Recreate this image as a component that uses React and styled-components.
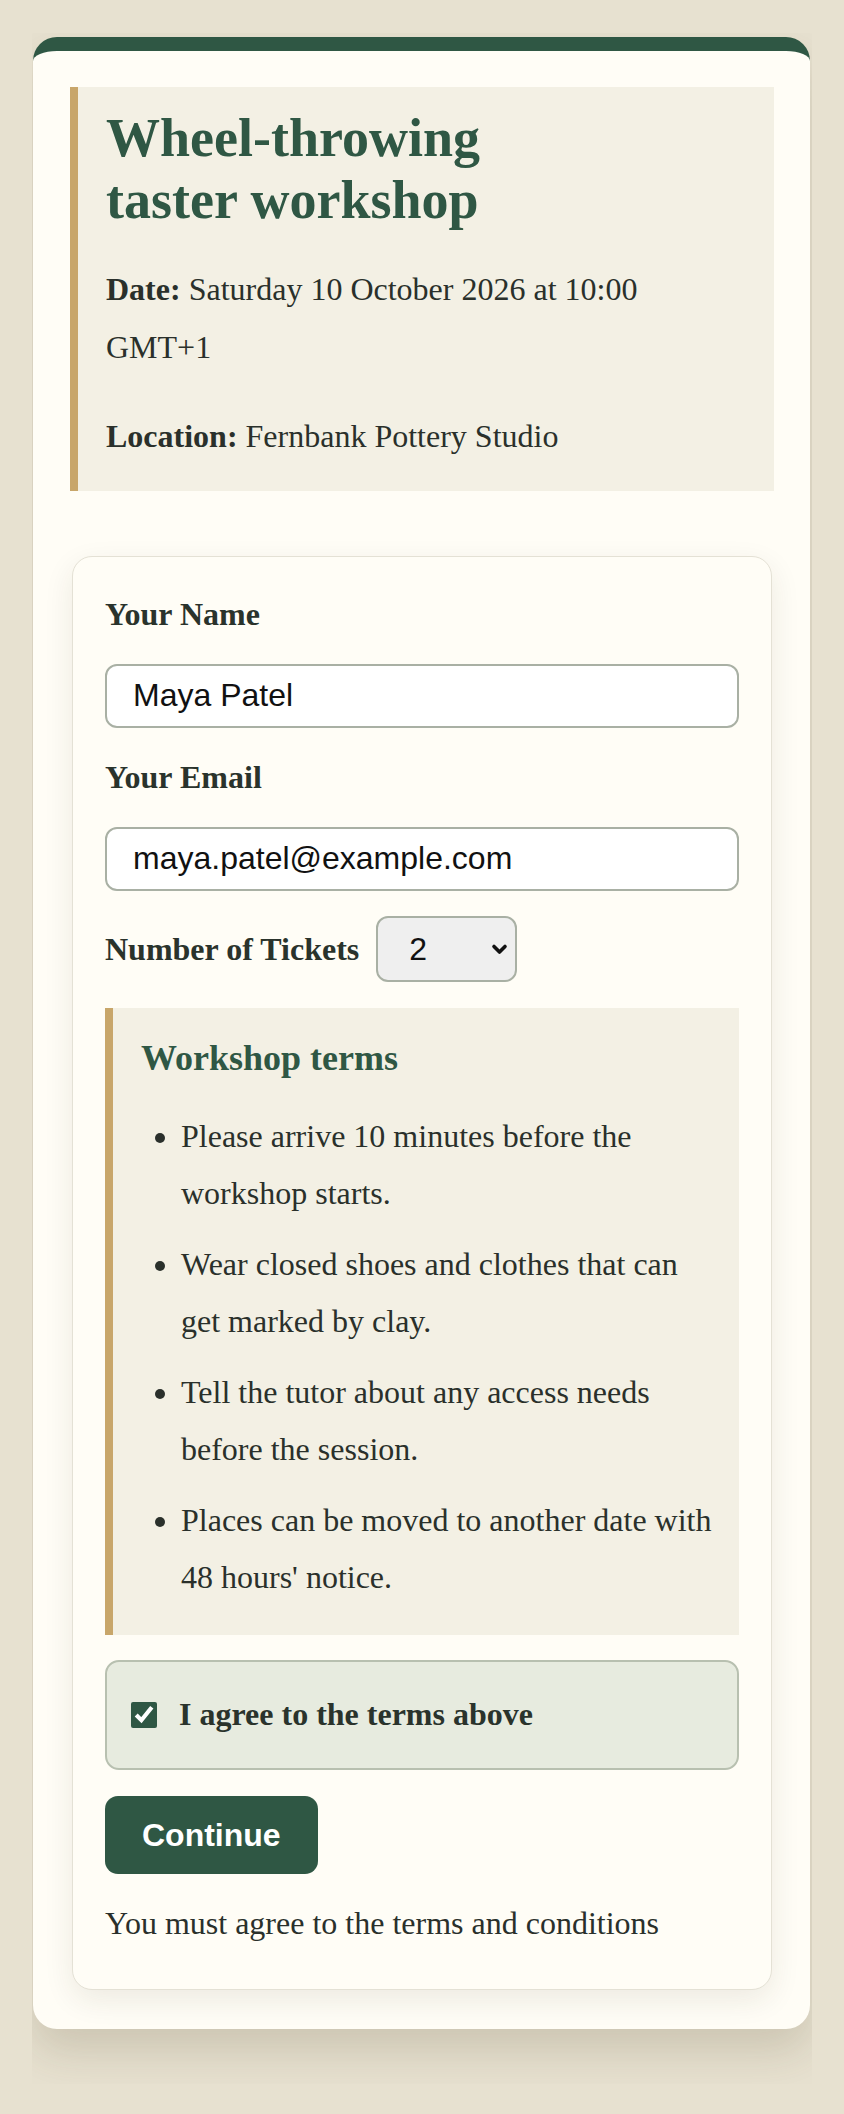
import React from "react";
import styled, { createGlobalStyle } from "styled-components";

const GlobalStyle = createGlobalStyle`
  * { box-sizing: border-box; }
  html, body { margin: 0; padding: 0; }
  body {
    background: #e7e1d0;
    font-family: "Liberation Serif", "Times New Roman", serif;
    font-size: 32px;
    line-height: 1.8;
    color: #2a302b;
  }
`;

const ShadowClip = styled.main`
  margin: 33px 32px 32px;
  padding: 4px 2px 55px 1px;
  overflow: hidden;
`;

const Card = styled.div`
  background: #fffdf6;
  border-top: 14px solid #2f5744;
  border-radius: 24px;
  padding: 36px 36px 39px 37px;
  box-shadow: 0 22px 44px rgba(70, 60, 30, 0.17);
`;

const Details = styled.section`
  background: #f3f0e4;
  border-left: 8px solid #c8a66a;
  padding: 20px 60px 25px 28px;
`;

const Title = styled.h1`
  margin: 0;
  max-width: 450px;
  font-size: 54px;
  line-height: 1.15;
  font-weight: bold;
  color: #2f5744;
`;

const Meta = styled.p`
  margin: ${(p) => (p.$first ? "30px" : "32px")} 0 0;
  color: #2a302b;
`;

const FormCard = styled.form`
  margin: 65px 2px 0;
  background: #fffdf6;
  border: 1px solid #e4e1d5;
  border-radius: 20px;
  padding: 33px 32px 42px;
  box-shadow: 0 10px 30px rgba(50, 45, 20, 0.09);
  display: flex;
  flex-direction: column;
  gap: 25.6px;
`;

const FieldLabel = styled.label`
  display: block;
  font-weight: bold;
  line-height: 1.5;
  color: #2a332c;
`;

const TextInput = styled.input`
  display: block;
  width: 100%;
  font-family: "Liberation Sans", Arial, sans-serif;
  font-size: 32px;
  line-height: normal;
  color: #111;
  background: #ffffff;
  border: 2px solid #a9b0a4;
  border-radius: 12px;
  padding: 11.5px 26px;
  outline: none;
`;

const TicketRow = styled.div`
  display: flex;
  align-items: center;
  gap: 17px;
`;

const SelectWrap = styled.div`
  position: relative;
  flex: none;
`;

const TicketSelect = styled.select`
  display: block;
  appearance: none;
  -webkit-appearance: none;
  width: 141px;
  height: 66px;
  font-family: "Liberation Sans", Arial, sans-serif;
  font-size: 32px;
  color: #111;
  background-color: #efefef;
  border: 2px solid #a9b0a4;
  border-radius: 12px;
  padding: 0 40px 0 31px;
  outline: none;
`;

const Chevron = styled.svg`
  position: absolute;
  right: 9px;
  top: 50%;
  margin-top: -6px;
  width: 17px;
  height: 12px;
  pointer-events: none;
`;

const Terms = styled.section`
  background: #f3f0e4;
  border-left: 8px solid #c8a66a;
  padding: 28px 24px 28px 28px;
`;

const TermsHeading = styled.h2`
  margin: 0;
  font-size: 36px;
  line-height: 1.25;
  font-weight: bold;
  color: #2f5744;
`;

const TermsList = styled.ul`
  margin: 26.7px 0 0;
  padding-left: 40px;
`;

const TermsItem = styled.li`
  & + & { margin-top: 12.8px; }
`;

const AgreeBox = styled.div`
  display: flex;
  align-items: center;
  gap: 22px;
  background: #e7ebdf;
  border: 2px solid #b8c0b0;
  border-radius: 14px;
  padding: 24px 24px;
`;

const Checkbox = styled.input`
  width: 26px;
  height: 26px;
  margin: 0;
  accent-color: #2f5744;
  flex: none;
`;

const AgreeLabel = styled.label`
  font-weight: bold;
  line-height: 1.8;
  color: #2a332c;
`;

const ContinueButton = styled.button`
  align-self: flex-start;
  font-family: "Liberation Sans", Arial, sans-serif;
  font-size: 32px;
  font-weight: bold;
  line-height: 36px;
  color: #ffffff;
  background: #2f5744;
  border: none;
  border-radius: 13px;
  padding: 21px 37px;
  cursor: pointer;
`;

const Message = styled.p`
  margin: 0;
  line-height: 1.5;
  color: #2a302b;
`;

const terms = [
  "Please arrive 10 minutes before the workshop starts.",
  "Wear closed shoes and clothes that can get marked by clay.",
  "Tell the tutor about any access needs before the session.",
  "Places can be moved to another date with 48 hours' notice.",
];

export default function App() {
  return (
    <>
      <GlobalStyle />
      <ShadowClip>
        <Card>
          <Details>
            <Title>Wheel-throwing taster workshop</Title>
            <Meta $first>
              <strong>Date:</strong> Saturday 10 October 2026 at 10:00 GMT+1
            </Meta>
            <Meta>
              <strong>Location:</strong> Fernbank Pottery Studio
            </Meta>
          </Details>
          <FormCard onSubmit={(e) => e.preventDefault()}>
            <FieldLabel htmlFor="name">Your Name</FieldLabel>
            <TextInput id="name" type="text" defaultValue="Maya Patel" />
            <FieldLabel htmlFor="email">Your Email</FieldLabel>
            <TextInput id="email" type="email" defaultValue="maya.patel@example.com" />
            <TicketRow>
              <FieldLabel htmlFor="tickets">Number of Tickets</FieldLabel>
              <SelectWrap>
                <TicketSelect id="tickets" defaultValue="2">
                  <option value="1">1</option>
                  <option value="2">2</option>
                  <option value="3">3</option>
                  <option value="4">4</option>
                </TicketSelect>
                <Chevron viewBox="0 0 17 12" aria-hidden="true">
                  <path
                    d="M3 3.5 L8.5 9 L14 3.5"
                    fill="none"
                    stroke="#111"
                    strokeWidth="3.6"
                    strokeLinecap="round"
                    strokeLinejoin="round"
                  />
                </Chevron>
              </SelectWrap>
            </TicketRow>
            <Terms>
              <TermsHeading>Workshop terms</TermsHeading>
              <TermsList>
                {terms.map((t) => (
                  <TermsItem key={t}>{t}</TermsItem>
                ))}
              </TermsList>
            </Terms>
            <AgreeBox>
              <Checkbox id="agree" type="checkbox" defaultChecked />
              <AgreeLabel htmlFor="agree">I agree to the terms above</AgreeLabel>
            </AgreeBox>
            <ContinueButton type="submit">Continue</ContinueButton>
            <Message>You must agree to the terms and conditions</Message>
          </FormCard>
        </Card>
      </ShadowClip>
    </>
  );
}
